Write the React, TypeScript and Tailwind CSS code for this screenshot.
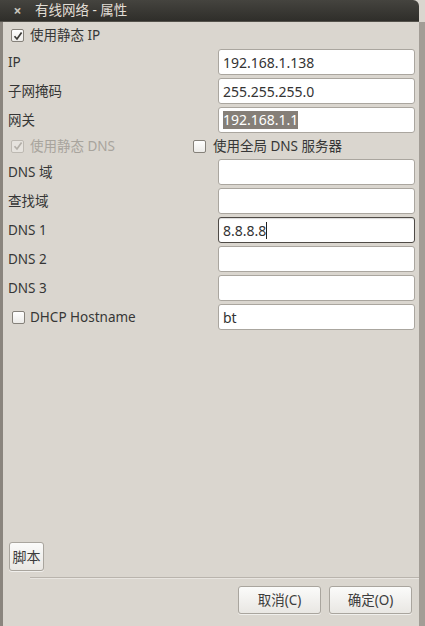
import React from 'react';

interface CheckProps {
  checked?: boolean;
  disabled?: boolean;
}

const Check = ({ checked, disabled }: CheckProps) => (
  <span
    className={`flex items-center justify-center w-[13px] h-[13px] rounded-[2px] border ${
      disabled ? 'border-[#bdb9b2] bg-[#e6e3de]' : 'border-[#85817a] bg-gradient-to-b from-[#ffffff] to-[#ecebe8]'
    }`}
  >
    {checked && (
      <svg width="10" height="10" viewBox="0 0 10 10">
        <path
          d="M1.5 5.2 L4 8 L8.6 1.6"
          fill="none"
          stroke={disabled ? '#b3afa8' : '#3c3b37'}
          strokeWidth="1.7"
        />
      </svg>
    )}
  </span>
);

interface FieldProps {
  label?: React.ReactNode;
  value?: string;
  selected?: boolean;
  focused?: boolean;
}

const Field = ({ label, value, selected, focused }: FieldProps) => (
  <div className="flex items-center h-[26px]">
    <div className="w-[210px] flex items-center">{label}</div>
    <div
      className={`w-[197px] h-[26px] rounded-[3px] bg-white flex items-center pl-[4px] border text-[14px] ${
        focused ? 'border-[#4f4b46] shadow-[inset_0_1px_1px_rgba(0,0,0,0.15)]' : 'border-[#aaa69f]'
      }`}
    >
      {selected ? (
        <span className="bg-[#857f78] text-white leading-[18px]">{value}</span>
      ) : (
        <span className="text-[#333333]">{value}</span>
      )}
      {focused && <span className="w-px h-[17px] bg-[#222222]" />}
    </div>
  </div>
);

const Button = ({ children, className }: { children: React.ReactNode; className?: string }) => (
  <div
    className={`flex items-center justify-center rounded-[3px] border border-[#a9a59e] bg-gradient-to-b from-[#fbfbfa] to-[#e9e7e3] text-[#3c3c3c] shadow-[0_1px_0_rgba(255,255,255,0.6)] ${className}`}
  >
    {children}
  </div>
);

export default function App() {
  return (
    <div
      className="w-[425px] h-[626px] flex flex-col bg-[#dad6cf] text-[13.5px] text-[#363636] overflow-hidden"
      style={{ fontFamily: '"Noto Sans", "Noto Sans CJK SC", sans-serif' }}
    >
      <div className="h-[22px] flex items-center bg-gradient-to-b from-[#45443f] to-[#2f2e2a] rounded-tr-[6px] mr-[6px] border-b border-[#54524c]">
        <span className="w-[35px] text-center text-[#c9c5bd] text-[14px] font-bold">×</span>
        <span className="text-[#e2ded6] text-[13.5px]">有线网络 - 属性</span>
      </div>

      <div className="flex-1 flex flex-col border-l-[3px] border-[#8a857e] border-r-[6px] border-r-[#a29d96] pl-[5px] pt-[3px]">
        <div className="flex flex-col gap-[3px]">
          <div className="h-[21px] flex items-center gap-[6px] pl-[3px]">
            <Check checked />
            <span>使用静态 IP</span>
          </div>
          <Field label="IP" value="192.168.1.138" />
          <Field label="子网掩码" value="255.255.255.0" />
          <Field label="网关" value="192.168.1.1" selected />
          <div className="h-[20px] flex items-center">
            <div className="w-[185px] flex items-center gap-[6px] pl-[3px]">
              <Check checked disabled />
              <span className="text-[#a8a49d]">使用静态 DNS</span>
            </div>
            <div className="flex items-center gap-[7px]">
              <Check />
              <span>使用全局 DNS 服务器</span>
            </div>
          </div>
          <Field label="DNS 域" />
          <Field label="查找域" />
          <Field label="DNS 1" value="8.8.8.8" focused />
          <Field label="DNS 2" />
          <Field label="DNS 3" />
          <Field
            label={
              <div className="flex items-center gap-[5px] pl-[4px]">
                <Check />
                <span>DHCP Hostname</span>
              </div>
            }
            value="bt"
          />
        </div>

        <div className="flex-1" />

        <Button className="w-[35px] h-[29px] ml-px text-[14px]">脚本</Button>
        <div className="h-px bg-[#b9b4ad] ml-[22px] mt-[6px] border-b border-[#e8e5e0] box-content" />
        <div className="flex justify-end gap-[8px] pr-[7px] mt-[7px] mb-[12px]">
          <Button className="w-[83px] h-[28px]">取消(C)</Button>
          <Button className="w-[83px] h-[28px]">确定(O)</Button>
        </div>
      </div>
    </div>
  );
}
